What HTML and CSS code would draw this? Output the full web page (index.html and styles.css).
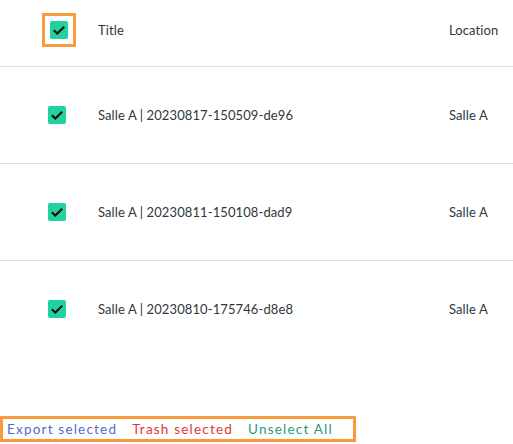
FILE: index.html
```html
<!DOCTYPE html>
<html>
<head>
<meta charset="utf-8">
<link rel="stylesheet" href="styles.css">
</head>
<body>
<div class="table">
  <div class="row head">
    <div class="cell-check"><span class="focus"><span class="cb"><svg viewBox="0 0 18 18" width="18" height="18"><path d="M3.8 9.2 L7.3 12.6 L14.2 5.7" fill="none" stroke="#111" stroke-width="2.1"/></svg></span></span></div>
    <div class="cell">Title</div>
    <div class="cell">Location</div>
  </div>
  <div class="row">
    <div class="cell-check"><span class="cb"><svg viewBox="0 0 18 18" width="18" height="18"><path d="M3.8 9.2 L7.3 12.6 L14.2 5.7" fill="none" stroke="#111" stroke-width="2.1"/></svg></span></div>
    <div class="cell">Salle A | 20230817-150509-de96</div>
    <div class="cell">Salle A</div>
  </div>
  <div class="row">
    <div class="cell-check"><span class="cb"><svg viewBox="0 0 18 18" width="18" height="18"><path d="M3.8 9.2 L7.3 12.6 L14.2 5.7" fill="none" stroke="#111" stroke-width="2.1"/></svg></span></div>
    <div class="cell">Salle A | 20230811-150108-dad9</div>
    <div class="cell">Salle A</div>
  </div>
  <div class="row last">
    <div class="cell-check"><span class="cb"><svg viewBox="0 0 18 18" width="18" height="18"><path d="M3.8 9.2 L7.3 12.6 L14.2 5.7" fill="none" stroke="#111" stroke-width="2.1"/></svg></span></div>
    <div class="cell">Salle A | 20230810-175746-d8e8</div>
    <div class="cell">Salle A</div>
  </div>
</div>
<div class="actions">
  <span class="act export">Export selected</span>
  <span class="act trash">Trash selected</span>
  <span class="act unselect">Unselect All</span>
</div>
</body>
</html>
```
FILE: styles.css
```css
html, body {
  margin: 0;
  padding: 0;
  background: #fff;
}
body {
  font-family: Lato, "Noto Sans", sans-serif;
  font-size: 13px;
  color: #2f3640;
  width: 513px;
}
.table {
  display: flex;
  flex-direction: column;
}
.row {
  display: grid;
  grid-template-columns: 98px 351px 1fr;
  align-items: center;
  height: 96px;
  border-bottom: 1px solid #e0e0e0;
}
.row.head {
  height: 66px;
  align-items: start;
}
.row.head .cell {
  padding-top: 22px;
}
.row.last {
  border-bottom: none;
}
.cell-check {
  display: flex;
  padding-left: 48px;
}
.row.head .cell-check {
  padding-left: 42px;
  padding-top: 13px;
}
.focus {
  display: flex;
  border: 3px solid #f89b3e;
  padding: 5px;
}
.cb {
  display: flex;
  width: 18px;
  height: 18px;
  background: #21d19f;
  border-radius: 2px;
}
.cell {
  white-space: nowrap;
  letter-spacing: 0.1px;
}
.actions {
  display: inline-flex;
  margin-top: 59px;
  border: 3px solid #f89b3e;
  padding: 2px 20px 2px 4px;
  gap: 15px;
  letter-spacing: 1.2px;
  font-size: 13.5px;
}
.export { color: #4f6ad6; }
.trash { color: #e03444; }
.unselect { color: #1f9a7c; }
```
